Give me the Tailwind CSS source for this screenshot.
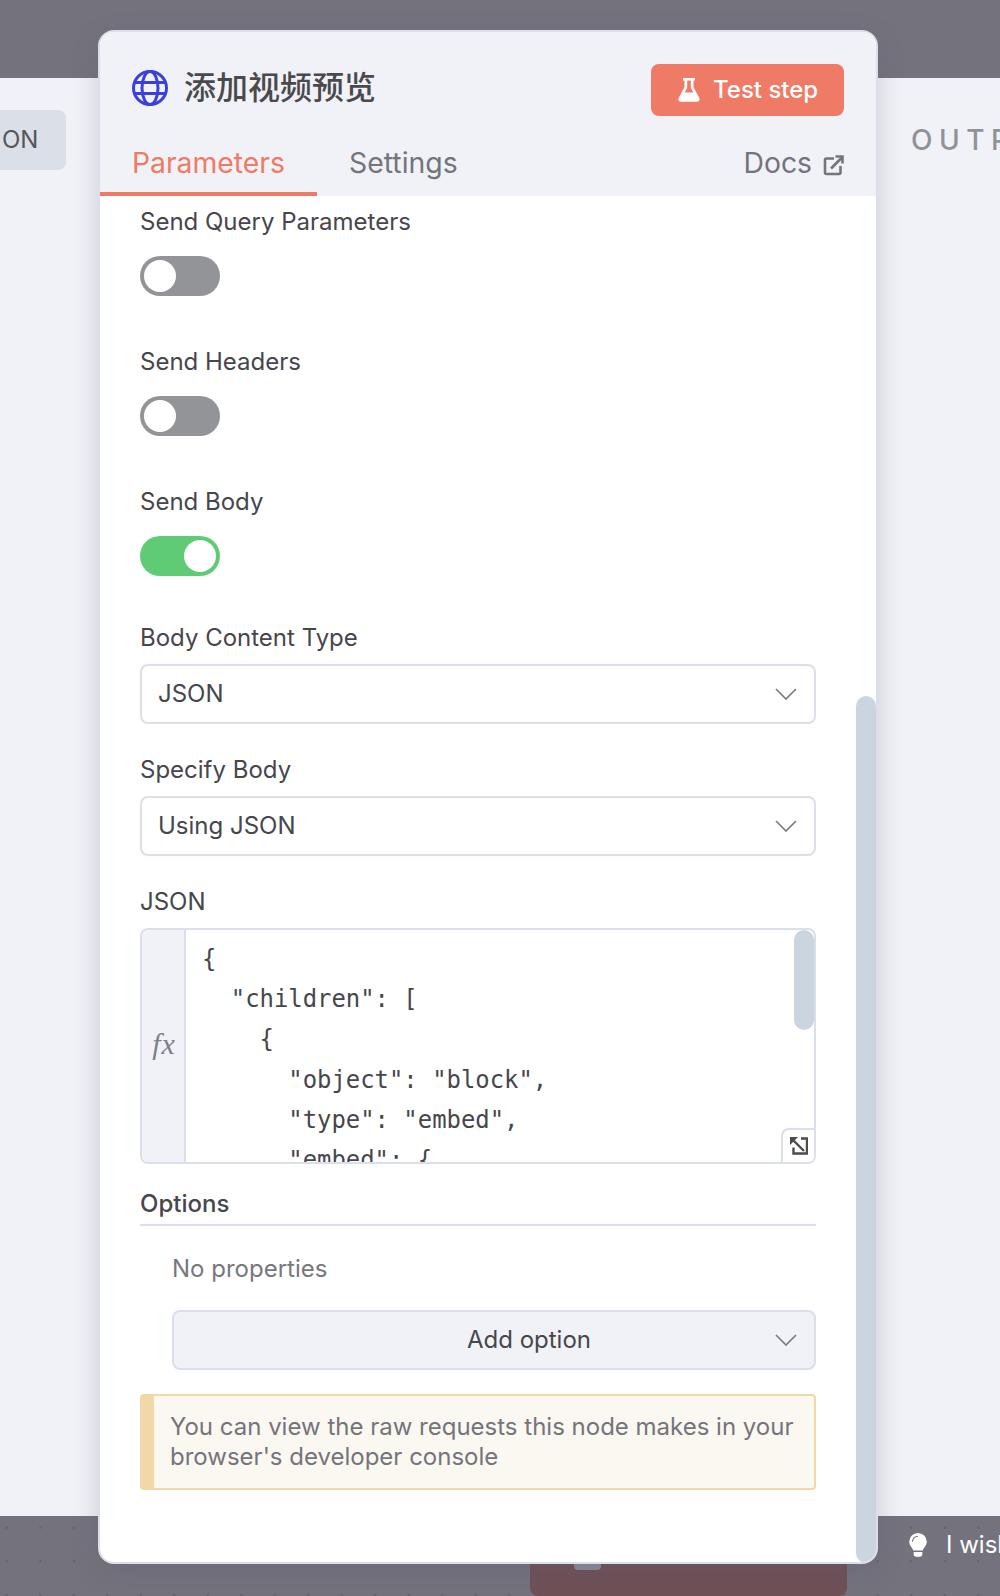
<!DOCTYPE html>
<html>
<head>
<meta charset="utf-8">
<script src="https://cdn.jsdelivr.net/npm/@tailwindcss/browser@4"></script>
</head>
<body class="font-['Inter','Noto_Sans_CJK_SC',sans-serif]">
<div class="relative w-[1000px] h-[1596px] overflow-hidden bg-[#74727c]">
  <!-- backdrop -->
  <div class="h-[78px] bg-[#74727c]"></div>
  <div class="h-[1438px] bg-[#f1f2f7] flex justify-between">
    <div class="mt-[32px] h-[60px] w-[66px] bg-[#dbdfe7] rounded-r-lg text-[#55565c] text-[24px] leading-[60px] pl-[2px] font-normal">ON</div>
    <div class="mt-[46px] w-[89px] text-[#909298] text-[28px] leading-[32px] font-medium tracking-[6.500px] whitespace-nowrap overflow-hidden">OUTPUT</div>
  </div>
  <div class="h-[80px] bg-[radial-gradient(circle,#64626c_1px,transparent_1px)] bg-[length:33.5px_33.5px] bg-[position:-10px_-5px]">
    <div class="flex justify-end items-center h-[58px] pr-0">
      <div class="flex items-center gap-[18px] text-white text-[24px] w-[92px] overflow-hidden whitespace-nowrap">
        <svg class="w-[20px] h-[24px] shrink-0" viewBox="0 0 20 26" fill="#fff"><path d="M10 0a9.500 9.500 0 0 0-9.500 9.500c0 3.500 2 5.200 3.300 7.200.6.900.9 1.500 1 2.300h10.400c.1-.8.4-1.400 1-2.300 1.300-2 3.300-3.700 3.300-7.200A9.500 9.500 0 0 0 10 0z"/><path d="M5.300 20.500h9.400v2.300a3 3 0 0 1-3 3H8.300a3 3 0 0 1-3-3z"/><path d="M10 3.500a6 6 0 0 0-6 6" fill="none" stroke="#74727c" stroke-width="1.200"/></svg>
        <span>I wish</span>
      </div>
    </div>
  </div>
  <div class="absolute left-[530px] top-[1560px] w-[317px] h-[36px] rounded-b-lg bg-[#6f5056]"></div>
  <div class="absolute left-[574px] top-[1560px] w-[27px] h-[10px] rounded-b bg-[#8b8a94]"></div>

  <!-- modal -->
  <div class="absolute left-[98px] top-[30px] w-[780px] h-[1534px] rounded-[16px] border-2 border-[#dbdfe9] bg-white overflow-hidden shadow-[0_8px_24px_rgba(90,92,115,0.25)]">
    <div class="bg-[#f1f2f7] h-[164px] flex flex-col">
      <div class="flex justify-between items-start pt-[32px] pl-[31px] pr-[32px]">
        <div class="flex items-center gap-[15px] h-[52px] -mt-[2px]">
          <svg class="w-[38px] h-[38px]" viewBox="0 0 38 38" fill="none" stroke="#3b40dc" stroke-width="3"><circle cx="19" cy="19" r="16.500"/><ellipse cx="19" cy="19" rx="8" ry="16.500"/><path d="M3.500 13.500h31M3.500 24.500h31"/></svg>
          <span class="text-[32px] leading-[40px] font-medium text-[#4a4a4e]">添加视频预览</span>
        </div>
        <div class="w-[193px] h-[52px] rounded-[8px] bg-[#ef7a66] text-white flex items-center pl-[27px] gap-[13px] text-[24px] font-medium">
          <svg class="w-[22px] h-[24px]" viewBox="0 0 22 24" fill="#fff"><path d="M5 0h12v2.500h-1.500v6.500L21.300 20a2.600 2.600 0 0 1-2.300 3.800H3A2.600 2.600 0 0 1 .7 20L6.500 9V2.500H5zM9.200 2.500v7.200L6.700 14.500h8.600l-2.500-4.800V2.500z"/></svg>
          <span>Test step</span>
        </div>
      </div>
      <div class="flex items-start justify-between mt-auto h-[80px] relative">
        <div class="flex h-full">
          <div class="w-[217px] h-full border-b-[4px] border-[#ef7a66] text-[#ef7a66] text-[28.300px] pl-[32px] pt-[30px] leading-[34px]">Parameters</div>
          <div class="text-[#74747c] text-[28.400px] pl-[32px] pt-[30px] leading-[34px]">Settings</div>
        </div>
        <div class="flex items-center gap-[11px] text-[#74747c] text-[28.300px] pt-[30px] leading-[34px] pr-[32px]">
          <span>Docs</span>
          <svg class="w-[21px] h-[21px] mt-[4px]" viewBox="0 0 21 21" fill="none" stroke="#74747c" stroke-width="2.600"><path d="M11 3.500H3.500a1.500 1.500 0 0 0-1.500 1.500v12.500A1.500 1.500 0 0 0 3.500 19H16a1.500 1.500 0 0 0 1.500-1.500V11" /><path d="M8 13.500 19 2.500"/><path d="M12.500 1.500h7v7" /></svg>
        </div>
      </div>
    </div>
    <!-- body -->
    <div class="relative pl-[40px] pr-[60px] pt-[11px] text-[24px] text-[#46464c]">
      <div class="leading-[30px]">Send Query Parameters</div>
      <div class="mt-[19px] w-[80px] h-[40px] rounded-full bg-[#939498] p-[4px] flex justify-start"><div class="w-[32px] h-[32px] rounded-full bg-white"></div></div>
      <div class="mt-[51px] leading-[30px]">Send Headers</div>
      <div class="mt-[19px] w-[80px] h-[40px] rounded-full bg-[#939498] p-[4px] flex justify-start"><div class="w-[32px] h-[32px] rounded-full bg-white"></div></div>
      <div class="mt-[51px] leading-[30px]">Send Body</div>
      <div class="mt-[19px] w-[80px] h-[40px] rounded-full bg-[#5fcc75] p-[4px] flex justify-end"><div class="w-[32px] h-[32px] rounded-full bg-white"></div></div>

      <div class="mt-[47px] leading-[30px]">Body Content Type</div>
      <div class="mt-[11px] h-[60px] rounded-[8px] border-2 border-[#dbdfe9] flex items-center justify-between pl-[16px] pr-[17px] text-[#46464c] text-[24px]">
        <span>JSON</span>
        <svg class="w-[22px] h-[12px]" viewBox="0 0 22 12" fill="none" stroke="#77777d" stroke-width="1.600"><path d="M1 1l10 10L21 1"/></svg>
      </div>
      <div class="mt-[31px] leading-[30px]">Specify Body</div>
      <div class="mt-[11px] h-[60px] rounded-[8px] border-2 border-[#dbdfe9] flex items-center justify-between pl-[16px] pr-[17px] text-[#46464c] text-[24px]">
        <span>Using JSON</span>
        <svg class="w-[22px] h-[12px]" viewBox="0 0 22 12" fill="none" stroke="#77777d" stroke-width="1.600"><path d="M1 1l10 10L21 1"/></svg>
      </div>
      <div class="mt-[31px] leading-[30px]">JSON</div>

      <div class="relative mt-[11px] h-[236px] rounded-[8px] border-2 border-[#dbdfe9] flex overflow-hidden">
        <div class="w-[44px] shrink-0 bg-[#f1f2f7] border-r-2 border-[#dbdfe9] flex items-center justify-center font-['Liberation_Serif',serif] italic text-[30px] tracking-[1px] text-[#7c7f90] pb-[6px] pl-[2px]">fx</div>
        <pre class="pl-[16px] pt-[9px] font-['DejaVu_Sans_Mono',monospace] text-[23.900px] leading-[40.200px] text-[#46464c]">{
  "children": [
    {
      "object": "block",
      "type": "embed",
      "embed": {</pre>
        <div class="absolute right-0 top-0 w-[20px] h-[100px] rounded-full bg-[#cbd5df]"></div>
        <div class="absolute right-0 bottom-0 w-[33px] h-[34px] rounded-tl-[8px] border-t-2 border-l-2 border-[#dbdfe9] bg-white flex items-center justify-center">
          <svg class="w-[18px] h-[18px]" viewBox="0 0 18 18" fill="none" stroke="#4b4b50" stroke-width="2.400"><path d="M2.500 2.500 14 14"/><path d="M0 0h8L0 8z" fill="#4b4b50" stroke="none"/><path d="M11 1.500h6v15H3.500v-6"/></svg>
        </div>
      </div>

      <div class="mt-[25px] leading-[30px] font-medium border-b-2 border-[#dbdfe9] pb-[5px]">Options</div>
      <div class="mt-[28px] leading-[30px] pl-[32px] text-[#77777d]">No properties</div>
      <div class="relative mt-[26px] ml-[32px] h-[60px] rounded-[8px] border-2 border-[#dbdfe9] bg-[#f1f2f7] flex items-center justify-center pl-[70px] text-[24px] text-[#46464c]">
        <span>Add option</span>
        <svg class="absolute right-[17px] w-[22px] h-[12px]" viewBox="0 0 22 12" fill="none" stroke="#77777d" stroke-width="1.600"><path d="M1 1l10 10L21 1"/></svg>
      </div>
      <div class="mt-[24px] h-[96px] rounded-[4px] border-2 border-l-[14px] border-[#f2d7a8] bg-[#fbf8f1] pl-[16px] pt-[16px] text-[24px] leading-[30px] text-[#74747c]">You can view the raw requests this node makes in your browser's developer console</div>
      <div class="absolute right-0 top-[500px] w-[20px] h-[867px] rounded-full bg-[#cbd5df]"></div>
    </div>
  </div>
</div>
</body>
</html>
